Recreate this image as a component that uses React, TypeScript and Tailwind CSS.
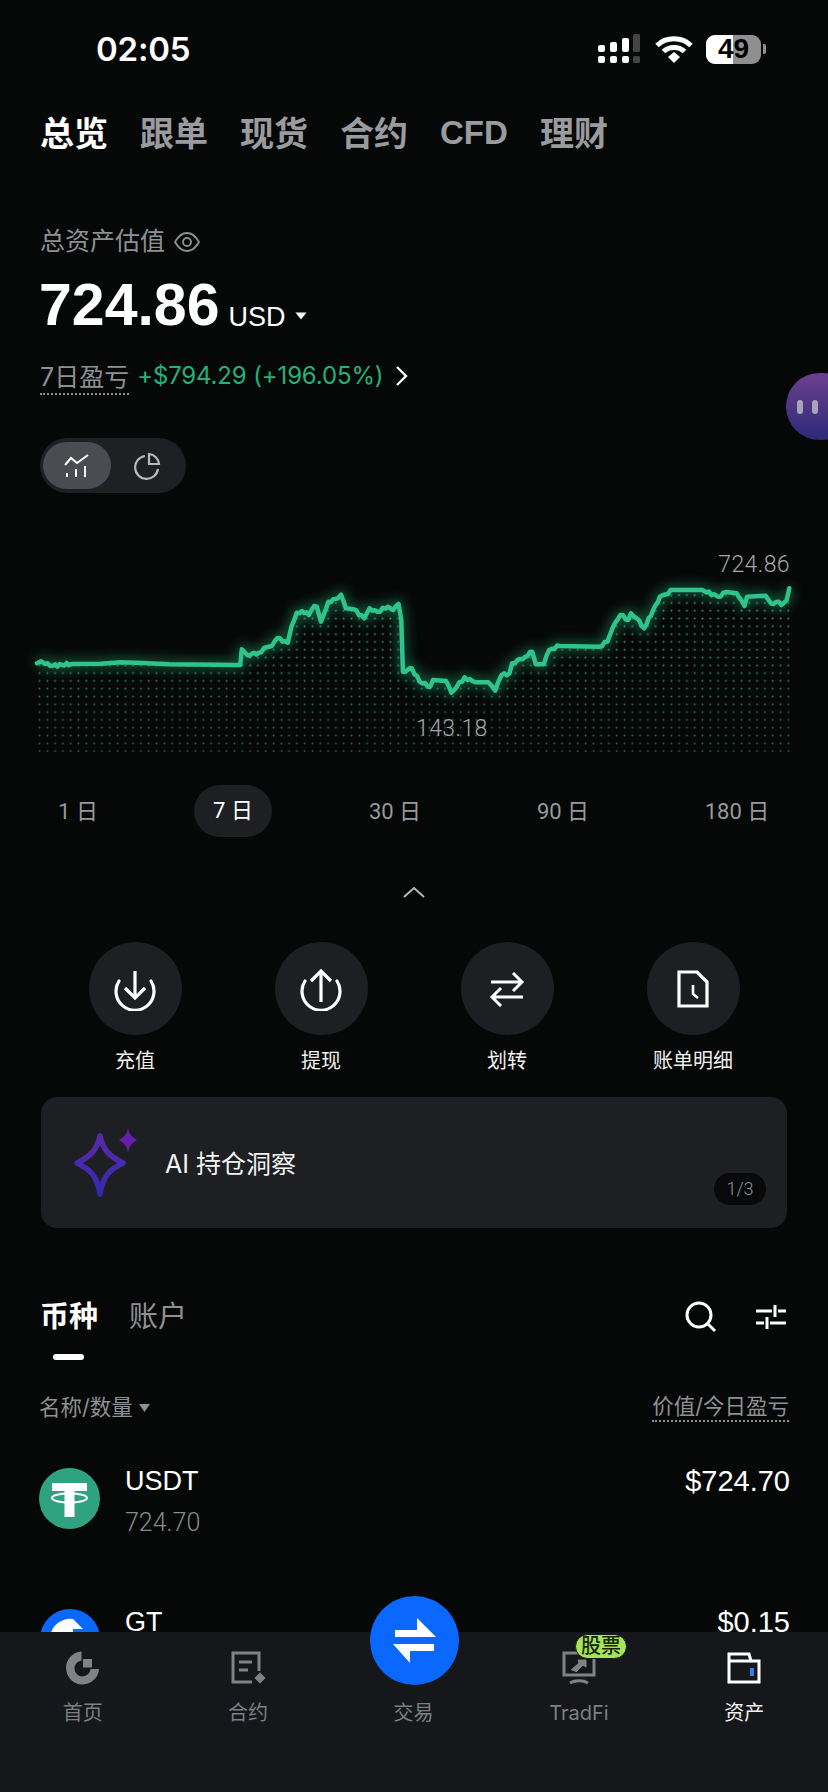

const zp: [number, number][] = [[70,730],[78,724],[85,732],[100,737],[135,732],[190,731],[230,727],[270,729],[320,733],[455,735],[458,688],[468,705],[490,698],[505,682],[515,678],[525,655],[545,668],[552,620],[562,578],[572,573],[585,585],[595,558],[600,560],[608,605],[622,545],[640,535],[646,524],[655,565],[670,568],[690,595],[700,565],[715,575],[735,560],[745,570],[755,552],[760,600],[763,755],[780,745],[795,785],[815,800],[820,780],[845,783],[855,818],[880,772],[900,787],[925,787],[938,812],[950,765],[965,760],[970,730],[995,710],[1008,695],[1015,733],[1030,733],[1040,690],[1060,678],[1135,680],[1150,665],[1160,625],[1175,585],[1190,600],[1195,580],[1210,600],[1220,625],[1250,530],[1265,522],[1270,510],[1330,510],[1360,530],[1375,516],[1395,520],[1410,558],[1415,530],[1450,527],[1460,550],[1475,545],[1480,555],[1490,540],[1495,505]];
const raw = zp.map(([x, y]) => [x / 1.894, 420 + y / 3]);
const pts: number[][] = [];
raw.forEach((p, i) => {
  const n = raw[i + 1];
  pts.push(p);
  if (!n) return;
  const dx = n[0] - p[0];
  const dy = n[1] - p[1];
  const noisy = Math.abs(dy) > 1.5 && dx > 4 && dx < 30;
  if (!noisy) return;
  const steps = Math.floor(dx / 2.2);
  for (let k = 1; k < steps; k++) {
    const t = k / steps;
    pts.push([p[0] + dx * t, p[1] + dy * t + Math.sin(k * 2.4 + i) * 1.4]);
  }
});
const line = pts.map(p => `${p[0].toFixed(1)},${p[1].toFixed(1)}`).join(" ");
const area = `38,752 ${line} 790,752`;
const font = "font-['Inter','Noto_Sans_CJK_SC',sans-serif]";

function Chart() {
  return (
    <svg viewBox="0 540 828 220" className="w-[828px] h-[220px] block">
      <defs>
        <pattern id="dots" x="38" y="500" width="7.8" height="7.8" patternUnits="userSpaceOnUse">
          <circle cx="1.5" cy="1.5" r="1.1" fill="#2fa076" />
        </pattern>
        <linearGradient id="fade" x1="0" y1="0" x2="0" y2="1">
          <stop offset="0" stopColor="#fff" stopOpacity="1" />
          <stop offset="1" stopColor="#fff" stopOpacity="0.55" />
        </linearGradient>
        <mask id="m"><rect x="0" y="540" width="828" height="220" fill="url(#fade)" /></mask>
      </defs>
      <polygon points={area} fill="url(#dots)" mask="url(#m)" />
      <polyline points={line} fill="none" stroke="#23b07c" strokeWidth="10" strokeLinejoin="round" className="blur-[6px]" opacity="0.45" />
      <polyline points={line} fill="none" stroke="#2ec48b" strokeWidth="4.5" strokeLinejoin="round" strokeLinecap="round" />
    </svg>
  );
}

function Action({ label, children }: { label: string; children: React.ReactNode }) {
  return (
    <div className="w-[186px] flex flex-col items-center">
      <div className="w-[93px] h-[93px] rounded-full bg-[#1d1f23] flex items-center justify-center">{children}</div>
      <div className="mt-[11px] h-[30px] leading-[30px] text-[20px] text-[#f0f0f0]">{label}</div>
    </div>
  );
}

function NavItem({ label, active, children }: { label: string; active?: boolean; children?: React.ReactNode }) {
  return (
    <div className="w-[165.4px] flex flex-col items-center">
      <div className="w-[40px] h-[40px] flex items-center justify-center">{children}</div>
      <div className={`mt-[11px] h-[28px] leading-[28px] text-[20px] ${active ? "text-[#f2f2f2]" : "text-[#7d7f83]"}`}>{label}</div>
    </div>
  );
}

export default function App() {
  return (
    <div className={`relative w-[828px] h-[1792px] overflow-hidden bg-[#060707] text-white ${font}`}>
      {/* status bar */}
      <div className="h-[98px] flex items-center justify-between pl-[96px] pr-[62px]">
        <span className="text-[33px] font-semibold leading-none tracking-[-0.2px]">02:05</span>
        <div className="flex items-center">
          <svg width="44" height="30" viewBox="0 0 44 30" className="mr-[14px]">
            <g fill="#fff">
              <rect x="1" y="11" width="7" height="7" rx="2" /><rect x="1" y="22" width="7" height="7" rx="2" />
              <rect x="13" y="8" width="7" height="10" rx="2" /><rect x="13" y="22" width="7" height="7" rx="2" />
              <rect x="25" y="4" width="7" height="14" rx="2" /><rect x="25" y="22" width="7" height="7" rx="2" />
            </g>
            <g fill="#444"><rect x="36" y="0" width="7" height="18" rx="1.5" /><rect x="36" y="22" width="7" height="7" rx="1.5" /></g>
          </svg>
          <svg width="38" height="28" viewBox="0 0 38 28" className="mr-[13px]">
            <path d="M2 10.5 C11 1.5 27 1.5 36 10.5" fill="none" stroke="#fff" strokeWidth="5" />
            <path d="M8.5 16.5 C14 11 24 11 29.5 16.5" fill="none" stroke="#fff" strokeWidth="5" />
            <path d="M13 22 L19 17 L25 22 L19 28 Z" fill="#fff" />
          </svg>
          <div className="relative w-[55px] h-[29px] rounded-[9px] overflow-hidden bg-[#8f8f8f] flex items-center justify-center">
            <div className="absolute left-0 top-0 bottom-0 w-[27px] bg-white" />
            <span className="relative text-[28px] font-bold text-black leading-none font-['Liberation_Sans']">49</span>
          </div>
          <div className="ml-[2px] w-[3px] h-[10px] bg-[#8f8f8f] rounded-r-[2px]" />
        </div>
      </div>

      {/* top tabs */}
      <div className="h-[70px] pl-[40px] flex items-center gap-[32px] text-[34px] font-bold text-[#9a9b9e]">
        <span className="text-white">总览</span>
        <span>跟单</span>
        <span>现货</span>
        <span>合约</span>
        <span className="text-[33px] font-['Liberation_Sans'] w-[68px]">CFD</span>
        <span>理财</span>
      </div>

      {/* total */}
      <div className="mt-[54px] h-[40px] pl-[40px] flex items-center text-[25px] text-[#8f9093]">
        <span>总资产估值</span>
        <svg width="26" height="26" viewBox="0 0 26 26" fill="none" stroke="#8f9093" strokeWidth="1.8" className="ml-[9px]">
          <path d="M1 13 C5 6 9 4 13 4 C17 4 21 6 25 13 C21 20 17 22 13 22 C9 22 5 20 1 13 Z" />
          <circle cx="13" cy="13" r="4" />
        </svg>
      </div>
      <div className="mt-[8px] h-[70px] pl-[39px] flex items-center">
        <span className="text-[59px] font-bold leading-none font-['Liberation_Sans']">724.86</span>
        <span className="ml-[9px] mt-[24px] text-[27px] leading-none font-['Liberation_Sans']">USD</span>
        <svg width="12" height="8" viewBox="0 0 12 8" className="ml-[10px] mt-[21px]"><path d="M0.5 0.5 H11.5 L6 7.5 Z" fill="#fff" /></svg>
      </div>
      <div className="mt-[16px] h-[40px] pl-[40px] flex items-center text-[24px]">
        <span className="text-[25px] text-[#8f9093] border-b-2 border-dotted border-[#8f9093] leading-[32px] mt-[3px]">7日盈亏</span>
        <span className="ml-[8px] text-[#21b27c] tracking-[-0.15px]">+$794.29 (+196.05%)</span>
        <svg width="14" height="22" viewBox="0 0 14 22" fill="none" stroke="#fff" strokeWidth="2.4" className="ml-[12px]"><path d="M2 2 L11 11 L2 20" /></svg>
      </div>

      {/* toggle */}
      <div className="mt-[42px] ml-[40px] w-[146px] h-[55px] rounded-full bg-[#1e2024] p-[3px] pt-[4px] flex">
        <div className="w-[68px] h-[47px] rounded-full bg-[#4a4c52] flex items-center justify-center">
          <svg width="26" height="24" viewBox="0 0 26 24" fill="none" stroke="#fff" strokeWidth="2">
            <path d="M1 11 L7 4 L13 9 L24 1" />
            <path d="M3 19 V23 M12 15 V23 M21 12 V23" />
          </svg>
        </div>
        <div className="flex-1 flex items-center justify-center">
          <svg width="28" height="28" viewBox="0 0 28 28" fill="none" stroke="#b8b9bb" strokeWidth="2.2">
            <path d="M12 4 A11.5 11.5 0 1 0 25 17" />
            <path d="M16 2 A11 11 0 0 1 26 12 H16 Z" />
          </svg>
        </div>
      </div>

      {/* chart */}
      <div className="relative mt-[47px]">
        <Chart />
        <span className="absolute right-[38px] top-[11px] text-[23px] leading-[28px] text-[#a5a6a8] font-['Roboto'] font-light tracking-[0.4px]">724.86</span>
        <span className="absolute left-[416px] top-[175px] text-[23px] leading-[28px] text-[#a5a6a8] font-['Roboto'] font-light tracking-[0.4px]">143.18</span>
      </div>

      {/* ranges */}
      <div className="mt-[25px] h-[52px] flex items-center text-[22px] text-[#98999c] font-['Roboto','Noto_Sans_CJK_SC',sans-serif]">
        <span className="ml-[38px] w-[80px] text-center">1 日</span>
        <span className="ml-[76px] w-[78px] h-[52px] leading-[52px] text-center rounded-full bg-[#1d1f23] text-white">7 日</span>
        <span className="ml-[88px] w-[70px] text-center">30 日</span>
        <span className="ml-[98px] w-[70px] text-center">90 日</span>
        <span className="ml-[99px] w-[80px] text-center">180 日</span>
      </div>

      {/* chevron */}
      <div className="mt-[50px] h-[10px] flex justify-center">
        <svg width="22" height="11" viewBox="0 0 22 11" fill="none" stroke="#b5b6b8" strokeWidth="2"><path d="M1 10 L11 1 L21 10" /></svg>
      </div>

      {/* actions */}
      <div className="mt-[45px] pl-[42px] flex">
        <Action label="充值">
          <svg width="44" height="44" viewBox="0 0 44 44" fill="none" stroke="#fff" strokeWidth="3.2">
            <path d="M6 14 A19 19 0 1 0 38 14" strokeLinecap="round" />
            <path d="M22 4 V31 M12 21 L22 31 L32 21" />
          </svg>
        </Action>
        <Action label="提现">
          <svg width="44" height="44" viewBox="0 0 44 44" fill="none" stroke="#fff" strokeWidth="3.2">
            <path d="M6 14 A19 19 0 1 0 38 14" strokeLinecap="round" />
            <path d="M22 35 V4 M12 14 L22 4 L32 14" />
          </svg>
        </Action>
        <Action label="划转">
          <svg width="38" height="36" viewBox="0 0 38 36" fill="none" stroke="#fff" strokeWidth="3">
            <path d="M3 11 H34 M25 2 L34 11 L25 20" />
            <path d="M35 26 H4 M13 17 L4 26 L13 35" />
          </svg>
        </Action>
        <Action label="账单明细">
          <svg width="32" height="38" viewBox="0 0 32 38" fill="none" stroke="#fff" strokeWidth="3.2">
            <path d="M2 2 H20 L30 12 V36 H2 Z" />
            <path d="M16 15 V24 L21 28" strokeWidth="2.6" />
          </svg>
        </Action>
      </div>

      {/* AI card */}
      <div className="mt-[21px] ml-[41px] w-[746px] h-[131px] rounded-[16px] bg-[#1d1f23] relative flex items-center pl-[124px]">
        <svg width="70" height="72" viewBox="0 0 70 72" className="absolute left-[32px] top-[31px]">
          <defs>
            <linearGradient id="ai" x1="0" y1="0" x2="0" y2="1"><stop offset="0" stopColor="#5a2aa8" /><stop offset="1" stopColor="#3528b0" /></linearGradient>
          </defs>
          <path d="M27 8 C30 22 36 28 50 35 C36 42 30 48 27 66 C24 48 18 42 4 35 C18 28 24 22 27 8 Z" fill="none" stroke="url(#ai)" strokeWidth="5.5" strokeLinejoin="round" />
          <path d="M55 0 C56 6 59 9 64 12 C59 15 56 18 55 25 C54 18 51 15 46 12 C51 9 54 6 55 0 Z" fill="#6420a8" />
        </svg>
        <span className="text-[25px] text-[#f2f2f2] mb-[-4px]">AI 持仓洞察</span>
        <span className="absolute left-[673px] top-[76px] w-[52px] h-[32px] rounded-full bg-[#08090a] text-[18px] leading-[32px] text-center text-[#8f9093] font-['Roboto'] font-light">1/3</span>
      </div>

      {/* list tabs */}
      <div className="mt-[65px] h-[48px] px-[40px] flex items-center">
        <span className="text-[29px] font-bold">币种</span>
        <span className="ml-[31px] text-[29px] text-[#8f9093]">账户</span>
        <div className="ml-auto flex items-center">
          <svg width="32" height="32" viewBox="0 0 32 32" fill="none" stroke="#fff" strokeWidth="3" className="mr-[38px]">
            <circle cx="14" cy="14" r="12" /><path d="M23 23 L30 30" />
          </svg>
          <svg width="32" height="24" viewBox="0 0 32 24" fill="none" stroke="#fff" strokeWidth="3" className="mr-[1px]">
            <path d="M1 6 H17 M23 6 H31 M20 0 V12" />
            <path d="M1 18 H9 M15 18 H31 M12 12 V24" />
          </svg>
        </div>
      </div>
      <div className="mt-[13px] ml-[53px] w-[31px] h-[6px] rounded-full bg-white" />

      {/* header */}
      <div className="mt-[30px] h-[34px] px-[39px] flex items-center justify-between text-[21.5px] text-[#8f9093]">
        <span className="flex items-center">名称/数量
          <svg width="11" height="8" viewBox="0 0 11 8" className="ml-[6px] mt-[2px]"><path d="M0 0 H11 L5.5 8 Z" fill="#8f9093" /></svg>
        </span>
        <span className="border-b-2 border-dotted border-[#8f9093] leading-[27px] text-[21.5px]">价值/今日盈亏</span>
      </div>

      {/* assets */}
      <div className="mt-[41px] pl-[39px] pr-[38px] h-[72px] flex items-start">
        <svg width="61" height="61" viewBox="0 0 61 61" className="mt-[3px] shrink-0">
          <circle cx="30.5" cy="30.5" r="30.5" fill="#2fa37f" />
          <path d="M13 15 H48 V23 H35.5 V49 H25.5 V23 H13 Z" fill="#fff" />
          <ellipse cx="30.5" cy="30" rx="17.5" ry="4.5" fill="none" stroke="#fff" strokeWidth="2" />
        </svg>
        <div className="ml-[25px]">
          <div className="text-[27px] leading-[32px] font-['Liberation_Sans']">USDT</div>
          <div className="mt-[11px] text-[25px] leading-[30px] text-[#88898c] font-['Roboto'] font-light">724.70</div>
        </div>
        <div className="ml-auto text-[29px] leading-[32px] font-['Liberation_Sans']">$724.70</div>
      </div>
      <div className="mt-[72px] pl-[40px] pr-[38px] flex items-start">
        <svg width="60" height="60" viewBox="0 0 60 60" className="shrink-0">
          <circle cx="30" cy="30" r="30" fill="#0a68ff" />
          <path d="M33 10 A20 20 0 1 0 50 30 H33 V20 H43" fill="#fff" />
        </svg>
        <div className="ml-[25px] mt-[-3px] text-[27px] leading-[32px] font-['Liberation_Sans'] font-medium">GT</div>
        <div className="ml-auto mt-[-3px] text-[29px] leading-[32px] font-['Liberation_Sans']">$0.15</div>
      </div>

      {/* floating assistant */}
      <div className="absolute left-[786px] top-[373px] w-[70px] h-[67px] rounded-full bg-gradient-to-b from-[#6d3f8e] to-[#2c2a78] flex items-center pl-[11px] gap-[9px]">
        <div className="w-[6px] h-[14px] rounded-full bg-[#a9a5b5]" />
        <div className="w-[6px] h-[14px] rounded-full bg-[#a9a5b5]" />
      </div>

      {/* bottom nav */}
      <div className="absolute left-0 right-0 top-[1632px] h-[160px] bg-[#15171a] pt-[16px] flex">
        <NavItem label="首页">
          <svg width="34" height="34" viewBox="0 0 34 34">
            <path d="M15.5 0.5 A16.5 16.5 0 1 0 33 18 H24.5 A8 8 0 1 1 15.5 9.5 Z" fill="#808285" />
            <rect x="17" y="8" width="9" height="8.5" fill="#808285" />
          </svg>
        </NavItem>
        <NavItem label="合约">
          <svg width="36" height="34" viewBox="0 0 36 34" fill="none" stroke="#808285" strokeWidth="3">
            <path d="M29 20 V2 H3 V31 H22" />
            <path d="M9 11 H22 M9 19 H18" />
            <path d="M30 22.5 L34.5 27 L30 31.5 L25.5 27 Z" fill="#808285" strokeWidth="1.5" />
          </svg>
        </NavItem>
        <NavItem label="交易" />
        <NavItem label="TradFi">
          <svg width="34" height="34" viewBox="0 0 34 34" fill="none" stroke="#808285" strokeWidth="3">
            <path d="M2 2 H32 V24 H2 Z" />
            <path d="M9 19 L17 12 L16 9 H24 V16 L21 14 L14 21" fill="#808285" strokeWidth="1" />
            <path d="M8 32 C13 29 21 29 26 32" />
          </svg>
        </NavItem>
        <NavItem label="资产" active>
          <svg width="34" height="32" viewBox="0 0 34 32" fill="none" stroke="#fff" strokeWidth="3">
            <path d="M2 9 V2 H22 L24 9 H32 V30 H2 Z" />
            <path d="M2 9 H24" />
            <rect x="23" y="16" width="4" height="8" fill="#2f7bf0" stroke="none" />
          </svg>
        </NavItem>
        <span className="absolute left-[575px] top-[2px] w-[52px] h-[25px] rounded-full bg-[#a5e556] border border-[#15171a] text-[#16240a] text-[20px] leading-[23px] text-center font-medium">股票</span>
      </div>

      {/* trade button */}
      <div className="absolute left-[370px] top-[1596px] w-[89px] h-[89px] rounded-full bg-[#0a68ff] flex items-center justify-center">
        <svg width="45" height="48" viewBox="0 0 45 48" fill="#fff">
          <polygon points="3,13 25,13 25,1 44,20 3,20" />
          <polygon points="1,27 42,27 42,34 18,34 18,46" />
        </svg>
      </div>
    </div>
  );
}
